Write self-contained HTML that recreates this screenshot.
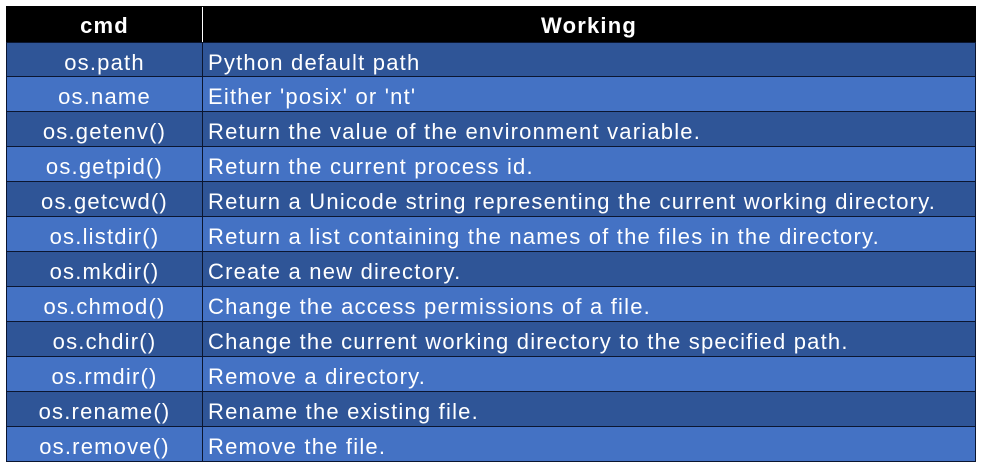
<!DOCTYPE html>
<html><head><style>
body{margin:0;background:#fff;width:983px;height:470px;overflow:hidden;font-family:"Liberation Sans",sans-serif;position:relative;}
.r{position:absolute;left:6px;width:970px;height:35px;box-sizing:border-box;border:1px solid #0b1630;border-top:none;color:#fff;font-size:22px;letter-spacing:1.2px;white-space:nowrap;line-height:39px;}
.r div{position:absolute;top:0;height:34px;}
.a{left:0;width:195px;text-align:center;border-right:1px solid #0b1630;}
.b{left:201px;}
.h{top:6px;height:36px;background:#000;border:1px solid #000;font-weight:bold;line-height:38px;}
.h .a{border-right:1px solid #fff;height:35px;}
.d{background:#2F5597;}
.l{background:#4472C4;}
</style></head><body>
<div class="r h"><div class="a">cmd</div><div class="b" style="left:196px;width:772px;text-align:center">Working</div></div>
<div class="r d" style="top:42px;border-top:1px solid #0b1630"><div class="a">os.path</div><div class="b">Python default path</div></div>
<div class="r l" style="top:77px"><div class="a">os.name</div><div class="b">Either 'posix' or 'nt'</div></div>
<div class="r d" style="top:112px"><div class="a">os.getenv()</div><div class="b">Return the value of the environment variable.</div></div>
<div class="r l" style="top:147px"><div class="a">os.getpid()</div><div class="b">Return the current process id.</div></div>
<div class="r d" style="top:182px"><div class="a">os.getcwd()</div><div class="b">Return a Unicode string representing the current working directory.</div></div>
<div class="r l" style="top:217px"><div class="a">os.listdir()</div><div class="b">Return a list containing the names of the files in the directory.</div></div>
<div class="r d" style="top:252px"><div class="a">os.mkdir()</div><div class="b">Create a new directory.</div></div>
<div class="r l" style="top:287px"><div class="a">os.chmod()</div><div class="b">Change the access permissions of a file.</div></div>
<div class="r d" style="top:322px"><div class="a">os.chdir()</div><div class="b">Change the current working directory to the specified path.</div></div>
<div class="r l" style="top:357px"><div class="a">os.rmdir()</div><div class="b">Remove a directory.</div></div>
<div class="r d" style="top:392px"><div class="a">os.rename()</div><div class="b">Rename the existing file.</div></div>
<div class="r l" style="top:427px"><div class="a">os.remove()</div><div class="b">Remove the file.</div></div>
</body></html>
